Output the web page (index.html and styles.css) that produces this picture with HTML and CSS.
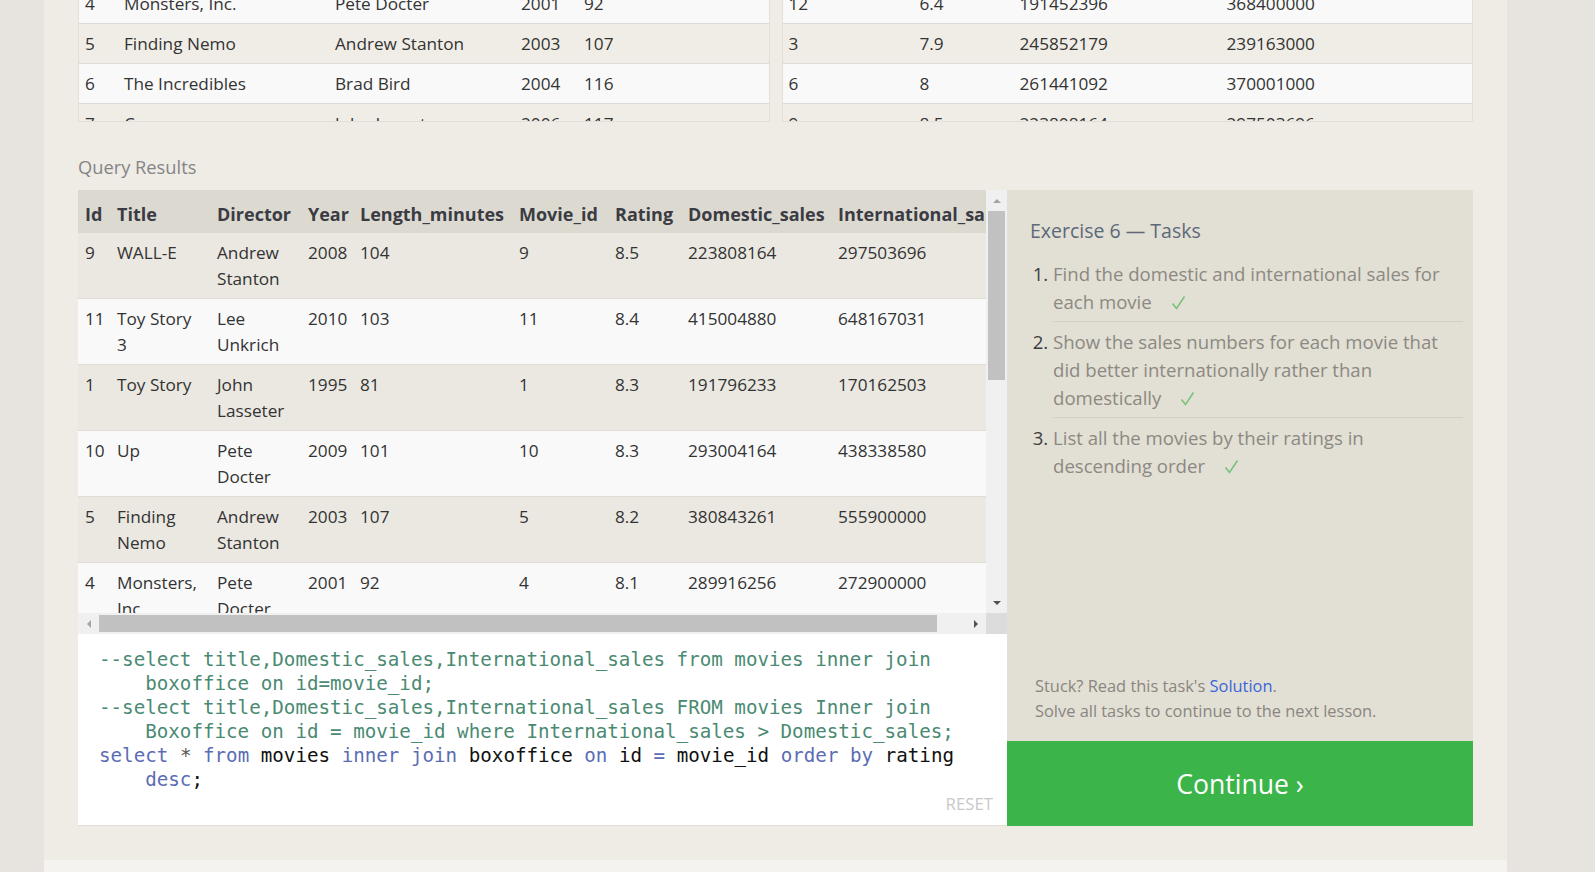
FILE: index.html
```html
<!DOCTYPE html>
<html lang="en">
<head>
<meta charset="utf-8">
<title>SQL Lesson 6 — Tasks</title>
<link rel="stylesheet" href="styles.css">
</head>
<body>
<div class="page">
  <div class="content">
    <div class="top-tables">
      <div class="tbox">
        <table class="mini mini-left">
          <colgroup><col class="c-id"><col class="c-title"><col class="c-dir"><col class="c-year"><col></colgroup>
          <tbody>
            <tr><td>4</td><td>Monsters, Inc.</td><td>Pete Docter</td><td>2001</td><td>92</td></tr>
            <tr><td>5</td><td>Finding Nemo</td><td>Andrew Stanton</td><td>2003</td><td>107</td></tr>
            <tr><td>6</td><td>The Incredibles</td><td>Brad Bird</td><td>2004</td><td>116</td></tr>
            <tr><td>7</td><td>Cars</td><td>John Lasseter</td><td>2006</td><td>117</td></tr>
          </tbody>
        </table>
      </div>
      <div class="tbox">
        <table class="mini mini-right">
          <colgroup><col class="c-mid"><col class="c-rating"><col class="c-dom"><col></colgroup>
          <tbody>
            <tr><td>12</td><td>6.4</td><td>191452396</td><td>368400000</td></tr>
            <tr><td>3</td><td>7.9</td><td>245852179</td><td>239163000</td></tr>
            <tr><td>6</td><td>8</td><td>261441092</td><td>370001000</td></tr>
            <tr><td>9</td><td>8.5</td><td>223808164</td><td>297503696</td></tr>
          </tbody>
        </table>
      </div>
    </div>

    <div class="section-label">Query Results</div>

    <div class="workspace">
      <div class="left-col">
        <div class="results">
          <div class="viewport">
            <table class="res">
              <colgroup>
                <col class="r-id"><col class="r-title"><col class="r-dir"><col class="r-year"><col class="r-len"><col class="r-mid"><col class="r-rating"><col class="r-dom"><col class="r-int">
              </colgroup>
              <thead>
                <tr><th>Id</th><th>Title</th><th>Director</th><th>Year</th><th>Length_minutes</th><th>Movie_id</th><th>Rating</th><th>Domestic_sales</th><th>International_sales</th></tr>
              </thead>
              <tbody>
                <tr><td>9</td><td>WALL-E</td><td>Andrew Stanton</td><td>2008</td><td>104</td><td>9</td><td>8.5</td><td>223808164</td><td>297503696</td></tr>
                <tr><td>11</td><td>Toy Story 3</td><td>Lee Unkrich</td><td>2010</td><td>103</td><td>11</td><td>8.4</td><td>415004880</td><td>648167031</td></tr>
                <tr><td>1</td><td>Toy Story</td><td>John Lasseter</td><td>1995</td><td>81</td><td>1</td><td>8.3</td><td>191796233</td><td>170162503</td></tr>
                <tr><td>10</td><td>Up</td><td>Pete Docter</td><td>2009</td><td>101</td><td>10</td><td>8.3</td><td>293004164</td><td>438338580</td></tr>
                <tr><td>5</td><td>Finding Nemo</td><td>Andrew Stanton</td><td>2003</td><td>107</td><td>5</td><td>8.2</td><td>380843261</td><td>555900000</td></tr>
                <tr><td>4</td><td>Monsters, Inc.</td><td>Pete Docter</td><td>2001</td><td>92</td><td>4</td><td>8.1</td><td>289916256</td><td>272900000</td></tr>
                <tr><td>6</td><td>The Incredibles</td><td>Brad Bird</td><td>2004</td><td>116</td><td>6</td><td>8</td><td>261441092</td><td>370001000</td></tr>
              </tbody>
            </table>
          </div>
          <div class="vscroll">
            <div class="sb-btn"><span class="tri tri-up"></span></div>
            <div class="vtrack"><div class="vthumb"></div></div>
            <div class="sb-btn"><span class="tri tri-down"></span></div>
          </div>
          <div class="hscroll">
            <div class="sb-btn"><span class="tri tri-left"></span></div>
            <div class="htrack"><div class="hthumb"></div></div>
            <div class="sb-btn"><span class="tri tri-right"></span></div>
          </div>
          <div class="corner"></div>
        </div>
        <div class="editor">
          <div class="code">
            <div class="ln cm">--select title,Domestic_sales,International_sales from movies inner join</div>
            <div class="ln cont cm">boxoffice on id=movie_id;</div>
            <div class="ln cm">--select title,Domestic_sales,International_sales FROM movies Inner join</div>
            <div class="ln cont cm">Boxoffice on id = movie_id where International_sales &gt; Domestic_sales;</div>
            <div class="ln"><span class="kw">select</span> <span class="op">*</span> <span class="kw">from</span> movies <span class="kw">inner</span> <span class="kw">join</span> boxoffice <span class="kw">on</span> id <span class="kw">=</span> movie_id <span class="kw">order</span> <span class="kw">by</span> rating</div>
            <div class="ln cont"><span class="kw">desc</span>;</div>
          </div>
          <div class="reset">RESET</div>
        </div>
      </div>

      <div class="tasks">
        <div class="tasks-body">
          <h2 class="tasks-title">Exercise 6 — Tasks</h2>
          <ol class="task-list">
            <li>Find the domestic and international sales for each movie <svg class="check" viewBox="0 0 15 15"><polyline points="1.5,8.5 5.5,13.5 13.5,1.5"/></svg></li>
            <li>Show the sales numbers for each movie that did better internationally rather than domestically <svg class="check" viewBox="0 0 15 15"><polyline points="1.5,8.5 5.5,13.5 13.5,1.5"/></svg></li>
            <li>List all the movies by their ratings in descending order <svg class="check" viewBox="0 0 15 15"><polyline points="1.5,8.5 5.5,13.5 13.5,1.5"/></svg></li>
          </ol>
        </div>
        <div class="stuck">
          <div>Stuck? Read this task's <a class="solution" href="#">Solution</a>.</div>
          <div>Solve all tasks to continue to the next lesson.</div>
        </div>
        <div class="continue">Continue ›</div>
      </div>
    </div>
  </div>
  <div class="footer"></div>
</div>
</body>
</html>
```
FILE: styles.css
```css
html, body {
  margin: 0;
  padding: 0;
  height: 100%;
  overflow: hidden;
}

body {
  background: #e7e4e0;
  font-family: "Open Sans", "Noto Sans", sans-serif;
  color: #333;
}

.page {
  margin-left: 44px;
  width: 1463px;
  background: #efece6;
}

.content {
  padding: 0 34px 34px;
}

/* ---------- top source tables ---------- */
.top-tables {
  display: flex;
  gap: 12px;
  margin-top: -17px;
}

.tbox {
  flex: 1;
  height: 139px;
  box-sizing: border-box;
  overflow: hidden;
  border: 1px solid #e2dfd8;
  background: #f9f9f9;
}

.mini {
  width: 100%;
  table-layout: fixed;
  border-collapse: collapse;
  font-size: 17.2px;
  line-height: 26px;
  color: #333;
}

.mini td {
  padding: 7px 6px 6px;
  border-bottom: 1px solid #dddbd5;
  white-space: nowrap;
  overflow: hidden;
}

.mini tr:nth-child(odd) td { background: #f9f9f9; }
.mini tr:nth-child(even) td { background: #f0ede6; }

.c-id { width: 39px; }
.c-title { width: 211px; }
.c-dir { width: 186px; }
.c-year { width: 63px; }

.c-mid { width: 131px; }
.c-rating { width: 100px; }
.c-dom { width: 207px; }

/* ---------- label ---------- */
.section-label {
  margin-top: 31px;
  font-size: 18.3px;
  line-height: 28px;
  color: #858585;
}

/* ---------- workspace ---------- */
.workspace {
  margin-top: 9px;
  display: flex;
  height: 636px;
}

.left-col {
  width: 929px;
  display: flex;
  flex-direction: column;
}

.results {
  display: grid;
  grid-template-columns: 908px 21px;
  grid-template-rows: 423px 21px;
}

.viewport {
  overflow: hidden;
  background: #f9f9f9;
}

.res {
  table-layout: fixed;
  width: 940px;
  border-collapse: collapse;
}

.r-id { width: 32px; }
.r-title { width: 100px; }
.r-dir { width: 91px; }
.r-year { width: 52px; }
.r-len { width: 159px; }
.r-mid { width: 96px; }
.r-rating { width: 73px; }
.r-dom { width: 150px; }
.r-int { width: 187px; }

.res th {
  background: #dcdad0;
  color: #3b3b44;
  font-weight: 700;
  font-size: 18px;
  line-height: 26px;
  padding: 11px 7px 6px;
  text-align: left;
  white-space: nowrap;
}

.res td {
  font-size: 17.2px;
  line-height: 26px;
  padding: 7px 7px 6px;
  border-bottom: 1px solid #dfddd6;
  vertical-align: top;
  color: #333;
}

.res tbody tr:nth-child(odd) td { background: #eae8e1; }
.res tbody tr:nth-child(even) td { background: #f9f9f9; }

/* fake scrollbars */
.vscroll {
  display: flex;
  flex-direction: column;
  background: #f0f0f0;
}

.hscroll {
  display: flex;
  background: #f0f0f0;
}

.corner {
  background: #dcdcdc;
}

.sb-btn {
  width: 21px;
  height: 21px;
  flex: none;
  display: flex;
  align-items: center;
  justify-content: center;
}

.vtrack {
  flex: 1;
  display: flex;
  flex-direction: column;
}

.vthumb {
  height: 169px;
  margin: 0 2px;
  background: #c1c1c1;
}

.htrack {
  flex: 1;
  display: flex;
}

.hthumb {
  width: 838px;
  margin: 2px 0;
  background: #c1c1c1;
}

.tri {
  width: 0;
  height: 0;
  display: block;
}

.tri-up {
  border-left: 4.5px solid transparent;
  border-right: 4.5px solid transparent;
  border-bottom: 4.5px solid #a3a3a3;
}

.tri-down {
  border-left: 4.5px solid transparent;
  border-right: 4.5px solid transparent;
  border-top: 4.5px solid #505050;
}

.tri-left {
  border-top: 4.5px solid transparent;
  border-bottom: 4.5px solid transparent;
  border-right: 4.5px solid #a3a3a3;
}

.tri-right {
  border-top: 4.5px solid transparent;
  border-bottom: 4.5px solid transparent;
  border-left: 4.5px solid #505050;
}

/* editor */
.editor {
  flex: 1;
  min-height: 0;
  background: #fff;
  border-bottom: 1px solid #e1ded7;
  padding: 14px 14px 9px 21px;
  display: flex;
  flex-direction: column;
}

.code {
  font-family: "DejaVu Sans Mono", "Liberation Mono", monospace;
  font-size: 19.2px;
  line-height: 24px;
  color: #111;
}

.ln {
  white-space: pre;
}

.ln.cont {
  padding-left: 4ch;
}

.cm { color: #4a8a72; }
.kw { color: #5b6cb4; }
.op { color: #555; }

.reset {
  margin-top: auto;
  text-align: right;
  font-size: 16.8px;
  line-height: 24px;
  color: #c9c9c9;
}

/* tasks */
.tasks {
  flex: 1;
  background: #e2dfd5;
  display: flex;
  flex-direction: column;
}

.tasks-body {
  flex: 1;
  padding: 27px 10px 0 23px;
}

.tasks-title {
  margin: 0;
  font-size: 19.5px;
  font-weight: 400;
  line-height: 28px;
  color: #5d6978;
}

.task-list {
  margin: 9px 0 0;
  padding-left: 23px;
  font-size: 18.6px;
  line-height: 28px;
  color: #8c8982;
}

.task-list li {
  padding: 6px 0 5px;
}

.task-list li + li {
  border-top: 1px solid #d3d0c6;
}

.task-list li::marker {
  color: #3c3c3c;
}

.check {
  display: inline-block;
  width: 15px;
  height: 15px;
  margin-left: 14px;
  vertical-align: -1px;
}

.check polyline {
  fill: none;
  stroke: #79c27b;
  stroke-width: 1.6;
}

.stuck {
  padding: 0 10px 18px 28px;
  font-size: 16.4px;
  line-height: 25px;
  color: #8a8680;
}

.solution {
  color: #3a66d8;
  text-decoration: none;
}

.continue {
  height: 85px;
  flex: none;
  background: #3bb54a;
  color: #fff;
  font-size: 26.6px;
  display: flex;
  align-items: center;
  justify-content: center;
}

.footer {
  height: 40px;
  background: #f4f3ef;
}
```
